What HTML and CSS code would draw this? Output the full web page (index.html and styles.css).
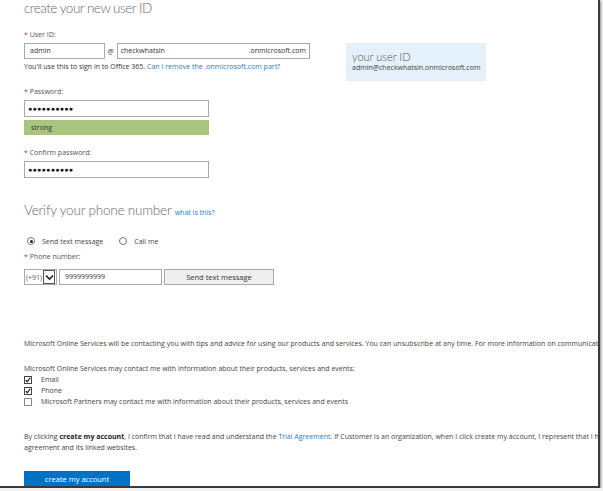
FILE: index.html
```html
<!DOCTYPE html>
<html lang="en">
<head>
    <meta charset="UTF-8">
    <title>create your new user ID</title>
    <link rel="stylesheet" href="styles.css">
</head>
<body>

<div class="frame">
    <div class="page">
        <div class="top">
            <div class="form-col">
                <h1 class="title">create your new user ID</h1>

                <div class="label first"><span class="req">*</span> User ID:</div>
                <div class="userid-row">
                    <div class="box admin-box">admin</div>
                    <span class="at">@</span>
                    <div class="box domain-box">
                        <span>checkwhatsin</span>
                        <span>.onmicrosoft.com</span>
                    </div>
                </div>
                <div class="hint">You'll use this to sign in to Office 365. <a href="#">Can I remove the .onmicrosoft.com part?</a></div>

                <div class="label pw-label"><span class="req">*</span> Password:</div>
                <div class="box pw-box">●●●●●●●●●●</div>
                <div class="strength">strong</div>

                <div class="label confirm-label"><span class="req">*</span> Confirm password:</div>
                <div class="box pw-box">●●●●●●●●●●</div>
            </div>

            <div class="id-card">
                <div class="id-title">your user ID</div>
                <div class="id-value">admin@checkwhatsin.onmicrosoft.com</div>
            </div>
        </div>

        <h2 class="title verify">Verify your phone number <a href="#" class="what">what is this?</a></h2>

        <div class="radio-row">
            <span class="radio checked"></span><span class="radio-text">Send text message</span>
            <span class="radio"></span><span class="radio-text">Call me</span>
        </div>

        <div class="label phone-label"><span class="req">*</span> Phone number:</div>
        <div class="phone-row">
            <div class="country">
                <span class="code">(+91)</span>
                <span class="drop">
                    <svg width="9" height="7" viewBox="0 0 9 7"><path d="M1 1.5 L4.5 5 L8 1.5" fill="none" stroke="#222" stroke-width="1.6"/></svg>
                </span>
            </div>
            <div class="box phone-box">9999999999</div>
            <div class="send-btn">Send text message</div>
        </div>

        <p class="notice">Microsoft Online Services will be contacting you with tips and advice for using our products and services. You can unsubscribe at any time. For more information on communication preferences, read the privacy statement.</p>

        <p class="notice contact">Microsoft Online Services may contact me with information about their products, services and events:</p>
        <div class="check-row"><span class="check on"><svg width="8" height="8" viewBox="0 0 8 8"><path d="M1 4 L3 6.5 L7 1" fill="none" stroke="#111" stroke-width="1.6"/></svg></span>Email</div>
        <div class="check-row"><span class="check on"><svg width="8" height="8" viewBox="0 0 8 8"><path d="M1 4 L3 6.5 L7 1" fill="none" stroke="#111" stroke-width="1.6"/></svg></span>Phone</div>
        <div class="check-row"><span class="check"></span>Microsoft Partners may contact me with information about their products, services and events</div>

        <p class="notice terms">By clicking <b>create my account</b>, I confirm that I have read and understand the <a href="#">Trial Agreement</a>. If Customer is an organization, when I click create my account, I represent that I have authority to bind that organization to this<br>agreement and its linked websites.</p>

        <div class="create-btn">create my account</div>
    </div>
</div>

</body>
</html>
```

FILE: styles.css
```css
body {
    margin: 0;
    background: #f2f2f2;
    font-family: "Open Sans", "Noto Sans", sans-serif;
    color: #444;
}
a {
    color: #2a7bc6;
    text-decoration: none;
}
.frame {
    width: 598px;
    height: 486px;
    border-right: 2px solid #3a3a3a;
    border-bottom: 2px solid #3a3a3a;
    box-shadow: 1px 1px 2px rgba(0, 0, 0, 0.4);
    background: white;
    overflow: hidden;
}
.page {
    padding-left: 24px;
    font-size: 7px;
    white-space: nowrap;
}
.top {
    display: flex;
    gap: 36px;
}
.form-col {
    width: 286px;
}
.title {
    margin: 0;
    font-family: Lato, "Open Sans", sans-serif;
    font-weight: 300;
    color: #6a6a6a;
    font-size: 13.5px;
    letter-spacing: -0.5px;
    line-height: 17px;
}
.label {
    margin-top: 12px;
    height: 9px;
    line-height: 9px;
    color: #555;
}
.label.first {
    margin-top: 13px;
}
.req {
    color: #d2332a;
}
.box {
    box-sizing: border-box;
    border: 1px solid #a9a9a9;
    background: white;
    height: 16px;
    line-height: 14px;
    padding: 0 5px;
    color: #333;
}
.userid-row {
    display: flex;
    align-items: center;
    margin-top: 4px;
}
.admin-box {
    width: 81px;
}
.at {
    width: 12px;
    text-align: center;
}
.domain-box {
    width: 194px;
    display: flex;
    justify-content: space-between;
    padding: 0 3px;
}
.hint {
    margin-top: 3px;
    line-height: 10px;
    color: #333;
}
.pw-label {
    margin-top: 15px;
}
.pw-box {
    width: 185px;
    height: 17px;
    line-height: 15px;
    margin-top: 4px;
    padding-left: 3px;
    font-size: 7px;
    letter-spacing: 0.3px;
    color: #111;
}
.strength {
    width: 185px;
    height: 15px;
    line-height: 15px;
    margin-top: 3px;
    background: #a9c47f;
    padding-left: 7px;
    box-sizing: border-box;
    color: #333;
}
.confirm-label {
    margin-top: 13px;
}
.id-card {
    margin-top: 43px;
    width: 140px;
    height: 38px;
    box-sizing: border-box;
    background: #e4f0fa;
    padding: 8px 0 0 6px;
}
.id-title {
    font-size: 11px;
    line-height: 12px;
    font-family: Lato, "Open Sans", sans-serif;
    font-weight: 300;
    color: #555;
}
.id-value {
    line-height: 10px;
    color: #444;
}
.verify {
    margin-top: 24px;
    font-size: 13.5px;
    letter-spacing: -0.2px;
}
.what {
    font-family: "Open Sans", sans-serif;
    font-size: 7px;
    letter-spacing: 0;
    font-weight: normal;
}
.radio-row {
    display: flex;
    align-items: center;
    margin-top: 15px;
    padding-left: 3px;
    height: 10px;
}
.radio {
    width: 6px;
    height: 6px;
    border: 1px solid #777;
    border-radius: 50%;
    margin-right: 7px;
    position: relative;
}
.radio.checked::after {
    content: "";
    position: absolute;
    left: 1.5px;
    top: 1.5px;
    width: 3px;
    height: 3px;
    border-radius: 50%;
    background: #222;
}
.radio-text {
    margin-right: 16px;
}
.phone-label {
    margin-top: 6px;
}
.phone-row {
    display: flex;
    margin-top: 8px;
    height: 16px;
}
.country {
    width: 33px;
    display: flex;
    align-items: center;
    border: 1px solid #a9a9a9;
    box-sizing: border-box;
    color: #555;
}
.code {
    flex: 1;
    padding-left: 1px;
}
.drop {
    width: 10px;
    height: 12px;
    border: 1px solid #555;
    display: flex;
    align-items: center;
    justify-content: center;
    margin-right: 1px;
}
.phone-box {
    width: 103px;
    margin-left: 2px;
}
.send-btn {
    width: 110px;
    margin-left: 2px;
    box-sizing: border-box;
    border: 1px solid #a9a9a9;
    background: #efefef;
    text-align: center;
    line-height: 14px;
    font-size: 7.5px;
    color: #333;
}
.notice {
    margin: 54px 0 0;
    line-height: 10px;
    color: #444;
}
.notice.contact {
    margin-top: 15px;
}
.check-row {
    display: flex;
    align-items: center;
    height: 11px;
    color: #444;
}
.check {
    width: 8px;
    height: 8px;
    border: 1px solid #888;
    box-sizing: border-box;
    margin-right: 9px;
    display: flex;
    align-items: center;
    justify-content: center;
    background: white;
}
.check.on {
    border-color: #444;
}
.notice.terms {
    margin-top: 24px;
    line-height: 11px;
}
.notice.terms b {
    color: #222;
}
.create-btn {
    margin-top: 18px;
    width: 106px;
    height: 17px;
    line-height: 17px;
    background: #0072c6;
    color: white;
    text-align: center;
    font-size: 7.5px;
}
```
